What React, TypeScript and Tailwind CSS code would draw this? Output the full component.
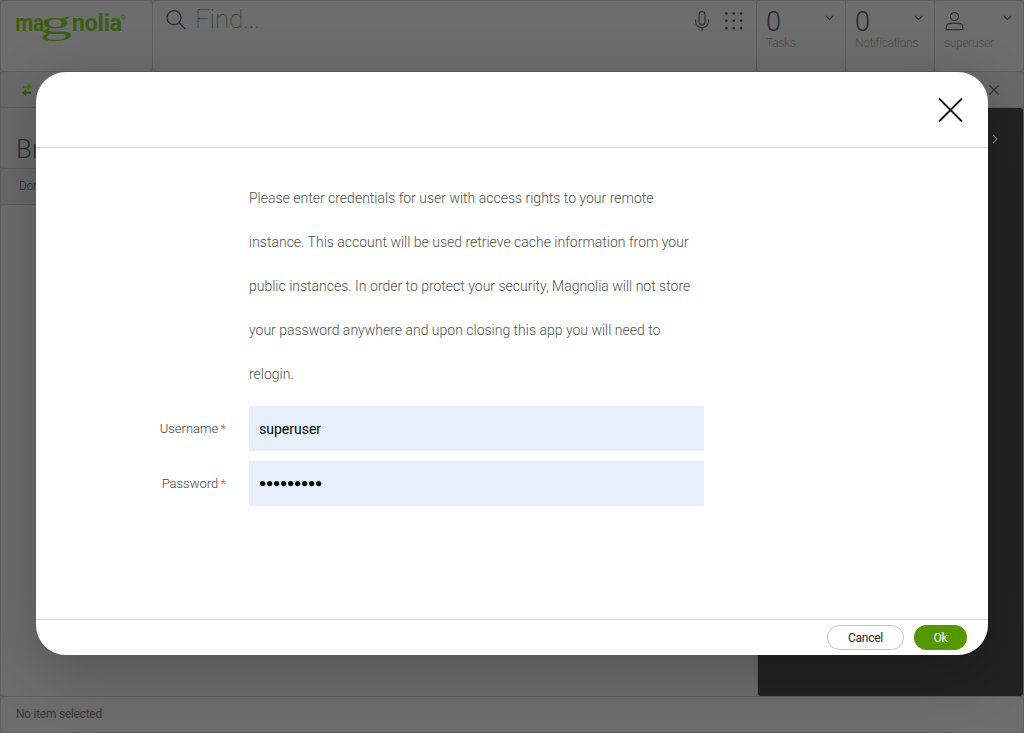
import React from "react";

function Chevron({ className = "" }: { className?: string }) {
  return (
    <svg className={className} width="9" height="6" viewBox="0 0 9 6" fill="none" stroke="currentColor" strokeWidth="1.1">
      <path d="M1 1 L4.5 4.5 L8 1" />
    </svg>
  );
}

function Logo() {
  return (
    <svg width="114" height="44" viewBox="0 0 114 44" fill="#3d5e12" className="ml-3.5 mt-2.5 overflow-visible">
      <g fontFamily="Roboto, sans-serif" fontWeight="700" fontSize="23.5">
        <text x="0.2" y="20" textLength="29" lengthAdjust="spacingAndGlyphs">ma</text>
        <text x="57" y="20" textLength="50" lengthAdjust="spacingAndGlyphs">nolia</text>
      </g>
      <text transform="translate(24.4 23.4) scale(2.1 1.12)" fontFamily="'Liberation Serif', serif" fontWeight="400" fontSize="31">g</text>
      <text x="105.6" y="8.8" fontFamily="Roboto, sans-serif" fontSize="7" fontWeight="400">®</text>
    </svg>
  );
}

function Counter({ label }: { label: string }) {
  return (
    <div className="flex w-[88px] justify-between rounded-[3px] bg-[#6d6d6d] pl-[9px] pr-[11px]">
      <div>
        <div className="mt-2 text-[27px] leading-[27px] text-[#2b2b30]">0</div>
        <div className="-mt-px text-xs leading-4 tracking-[-0.3px] text-[#505050]">{label}</div>
      </div>
      <Chevron className="-ml-2 mt-3.5 shrink-0 text-[#303030]" />
    </div>
  );
}

function Field({ label, value, strong }: { label: string; value: string; strong?: boolean }) {
  return (
    <div className="flex h-[45px] items-center">
      <label className="w-[190px] text-right text-[13px] text-[#424242]">
        {label} <span className="-ml-px text-[#e84545]">*</span>
      </label>
      <div className="ml-[23px] flex h-full w-[455px] items-center bg-[#e8f0fe] px-2.5 text-sm font-normal text-black">
        {strong ? (
          <span>{value}</span>
        ) : (
          <svg width="63" height="8" viewBox="0 0 63 8" className="-mt-0.5" aria-label="Password">
            {[0, 1, 2, 3, 4, 5, 6, 7, 8].map((i) => (
              <circle key={i} cx={3.7 + i * 7} cy="4.6" r="2.6" />
            ))}
          </svg>
        )}
      </div>
    </div>
  );
}

function Header() {
  return (
    <header className="flex h-[70px] shrink-0 gap-px">
      <div className="w-[151px] rounded-[3px] bg-[#6d6d6d]"><Logo /></div>
      <div className="flex flex-1 items-start rounded-[3px] bg-[#6d6d6d]">
        <svg width="22" height="22" viewBox="0 0 22 22" fill="none" stroke="#2a2a32" strokeWidth="1.25" className="ml-3 mt-2">
          <circle cx="9" cy="8.7" r="7" />
          <path d="M14 13.7 L20.5 20" />
        </svg>
        <div className="ml-2 mt-[3px] flex-1 text-[26px] font-extralight leading-[30px] tracking-[-0.2px] text-[#484848]">Find...</div>
        <svg width="16" height="22" viewBox="0 0 16 22" fill="none" stroke="#303030" strokeWidth="1.15" className="mt-[9px]">
          <rect x="5" y="1.6" width="6" height="13.2" rx="3" />
          <path d="M1.6 9.5 V11.4 A6.4 6.4 0 0 0 14.4 11.4 V9.5 M8 17.5 V21" />
        </svg>
        <svg width="18" height="18" viewBox="0 0 18 18" fill="#252525" className="ml-[15px] mr-[13px] mt-[11px]">
          {[1.5, 8.8, 16.1].map((y) => [1.5, 8.8, 16.1].map((x) => <circle key={`${x}-${y}`} cx={x} cy={y} r="1.3" />))}
        </svg>
      </div>
      <Counter label="Tasks" />
      <Counter label="Notifications" />
      <div className="flex w-[88px] justify-between rounded-[3px] bg-[#6d6d6d] pl-[9px] pr-[11px]">
        <div>
          <svg width="20" height="20" viewBox="0 0 20 20" fill="none" stroke="#303030" strokeWidth="1.15" className="mt-2.5">
            <circle cx="10.5" cy="5.6" r="4" />
            <path d="M2.2 18.6 V16.4 C2.2 13.8 4 12.4 6.5 12.4 H14.5 C17 12.4 18.8 13.8 18.8 16.4 V18.6 Z" />
          </svg>
          <div className="mt-1 text-xs leading-4 tracking-[-0.3px] text-[#505050]">superuser</div>
        </div>
        <Chevron className="mt-3.5 shrink-0 text-[#303030]" />
      </div>
    </header>
  );
}

function Dialog() {
  return (
    <div className="absolute left-9 top-[72px] flex h-[583px] w-[952px] flex-col overflow-hidden rounded-[30px] bg-white">
      <div className="flex h-[76px] shrink-0 justify-end border-b border-[#d7d7d7]">
        <svg width="26" height="26" viewBox="0 0 26 26" stroke="#1b1b1b" strokeWidth="1.8" className="mr-[25px] mt-[25px]">
          <path d="M2 1.5 L25 24.5 M25 1.5 L2 24.5" />
        </svg>
      </div>
      <div className="flex-1 pt-7">
        <p className="ml-[213px] w-[455px] text-sm leading-[44px] text-[#505050]">
          Please enter credentials for user with access rights to your remote<br />
          instance. This account will be used retrieve cache information from your<br />
          public instances. In order to protect your security, Magnolia will not store<br />
          your password anywhere and upon closing this app you will need to<br />
          relogin.
        </p>
        <div className="mt-2.5 flex flex-col gap-2.5">
          <Field label="Username" value="superuser" strong />
          <Field label="Password" value="" />
        </div>
      </div>
      <div className="flex h-9 shrink-0 items-start justify-end gap-2.5 border-t border-[#d7d7d7] pr-[21px] pt-[5px] text-xs font-normal tracking-[-0.25px]">
        <button className="h-[25px] w-[77px] rounded-full border border-[#c4c4c4] text-[#252525]">Cancel</button>
        <button className="h-[25px] w-[53px] rounded-full bg-[#559700] text-white">Ok</button>
      </div>
    </div>
  );
}

export default function App() {
  return (
    <div className="relative flex h-[733px] w-[1024px] flex-col gap-px overflow-hidden bg-[#5e5e5e] p-px font-['Roboto',sans-serif] font-light">
      <Header />
      <div className="flex h-[35px] shrink-0 items-center justify-between rounded-[3px] bg-[#6a6a6a] px-5">
        <svg width="12" height="14" viewBox="0 0 12 14">
          <path d="M2 3 H6.8 V.7 L11.4 4 L6.8 7.3 V5 H2 Z" fill="#4a6e15" />
          <path d="M10 10.8 H5.2 V13 L.6 9.7 L5.2 6.4 V8.7 H10 Z" fill="#36560d" />
        </svg>
        <svg width="10" height="10" viewBox="0 0 10 10" stroke="#303030" strokeWidth="1.1" className="mr-1">
          <path d="M.5 .5 L9.5 9.5 M9.5 .5 L.5 9.5" />
        </svg>
      </div>
      <main className="flex min-h-0 flex-1 gap-px">
        <div className="flex flex-1 flex-col gap-px">
          <div className="flex h-[60px] items-end rounded-[3px] bg-[#6a6a6a] pb-1 pl-[15px] text-[26px] leading-[30px] text-[#303030]">Browser</div>
          <div className="flex h-[35px] items-center rounded-[3px] bg-[#6a6a6a] pb-0.5 pl-[18px] text-xs tracking-[-0.2px] text-[#303030]">Domain</div>
          <div className="flex-1 rounded-[3px] bg-[#6d6d6d]" />
        </div>
        <div className="flex w-[265px] justify-end rounded-[3px] bg-[#232323] pr-[25px] pt-[26px]">
          <svg width="6" height="10" viewBox="0 0 6 10" fill="none" stroke="#8a8a8a" strokeWidth="1.1">
            <path d="M1 .8 L5 5 L1 9.2" />
          </svg>
        </div>
      </main>
      <footer className="flex h-[35px] shrink-0 items-center rounded-[3px] bg-[#6d6d6d] pb-0.5 pl-[15px] text-xs font-normal tracking-[-0.27px] text-[#383838]">No item selected</footer>
      <div className="absolute left-9 top-[72px] h-[583px] w-[952px] rounded-[30px] shadow-[0_16px_60px_rgba(0,0,0,0.24)]" />
      <Dialog />
    </div>
  );
}
